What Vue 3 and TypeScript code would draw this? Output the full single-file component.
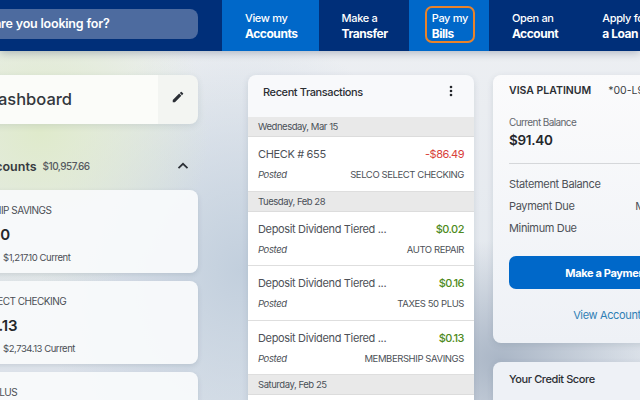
<template>
  <div class="page">
    <header class="top">
      <div class="search">What are you looking for?</div>
      <nav class="nav">
        <a v-for="item in navItems" :key="item.bottom" class="nav-item" :class="{ active: item.active, focus: item.focus }">
          <span class="nav-in">
            <span>{{ item.top }}</span>
            <b>{{ item.bottom }}</b>
          </span>
        </a>
      </nav>
    </header>

    <main class="columns">
      <section class="col-left">
        <div class="dash">
          <h1>Dashboard</h1>
          <button class="edit" aria-label="Edit">
            <svg width="14" height="14" viewBox="0 0 24 24"><path fill="#2b2f36" d="M3 17.25V21h3.75L17.81 9.94l-3.75-3.75L3 17.25zM20.71 7.04a1 1 0 0 0 0-1.41l-2.34-2.34a1 1 0 0 0-1.41 0l-1.83 1.83 3.75 3.75 1.83-1.83z"/></svg>
          </button>
        </div>
        <div class="acc-head">
          <span class="acc-title">Accounts</span>
          <span class="acc-total">$10,957.66</span>
          <svg class="chev" width="14" height="14" viewBox="0 0 14 14"><path d="M2.5 9.2 7 4.8l4.5 4.4" fill="none" stroke="#2b2f36" stroke-width="1.7"/></svg>
        </div>
        <div v-for="acc in accounts" :key="acc.name" class="acc-card">
          <div class="acc-name">{{ acc.name }}</div>
          <div class="acc-amount">{{ acc.amount }}</div>
          <div class="acc-sub">{{ acc.amount }} Current</div>
        </div>
      </section>

      <section class="card tx">
        <div class="tx-head">
          <span>Recent Transactions</span>
          <svg width="4" height="12" viewBox="0 0 4 12"><g fill="#23262b"><circle cx="2" cy="2" r="1.3"/><circle cx="2" cy="6" r="1.3"/><circle cx="2" cy="10" r="1.3"/></g></svg>
        </div>
        <template v-for="group in groups" :key="group.date">
          <div class="tx-date">{{ group.date }}</div>
          <div v-for="row in group.rows" :key="row.account" class="tx-row">
            <div class="tx-line">
              <span>{{ row.title }}</span>
              <span class="amt" :class="row.amount.startsWith('-') ? 'neg' : 'pos'">{{ row.amount }}</span>
            </div>
            <div class="tx-line small">
              <i>Posted</i>
              <span>{{ row.account }}</span>
            </div>
          </div>
        </template>
      </section>

      <section class="col-right">
        <div class="card visa">
          <div class="visa-head">
            <b>VISA PLATINUM</b>
            <span>*00-L9</span>
          </div>
          <div class="bal-label">Current Balance</div>
          <div class="bal">$91.40</div>
          <hr>
          <div v-for="line in dueLines" :key="line.label" class="due">
            <span>{{ line.label }}</span>
            <span class="due-val">{{ line.value }}</span>
          </div>
          <button class="pay">Make a Payment</button>
          <a class="view">View Account</a>
        </div>
        <div class="card credit">Your Credit Score</div>
      </section>
    </main>
  </div>
</template>

<script setup lang="ts">
const navItems = [
  { top: 'View my', bottom: 'Accounts', active: true },
  { top: 'Make a', bottom: 'Transfer' },
  { top: 'Pay my', bottom: 'Bills', active: true, focus: true },
  { top: 'Open an', bottom: 'Account' },
  { top: 'Apply for', bottom: 'a Loan' },
]

const accounts = [
  { name: 'MEMBERSHIP SAVINGS', amount: '$1,217.10' },
  { name: 'SELCO SELECT CHECKING', amount: '$2,734.13' },
  { name: 'TAXES 50 PLUS', amount: '$1,006.43' },
]

const groups = [
  {
    date: 'Wednesday, Mar 15',
    rows: [{ title: 'CHECK # 655', amount: '-$86.49', account: 'SELCO SELECT CHECKING' }],
  },
  {
    date: 'Tuesday, Feb 28',
    rows: [
      { title: 'Deposit Dividend Tiered ...', amount: '$0.02', account: 'AUTO REPAIR' },
      { title: 'Deposit Dividend Tiered ...', amount: '$0.16', account: 'TAXES 50 PLUS' },
      { title: 'Deposit Dividend Tiered ...', amount: '$0.13', account: 'MEMBERSHIP SAVINGS' },
    ],
  },
  {
    date: 'Saturday, Feb 25',
    rows: [{ title: 'Deposit Dividend Tiered ...', amount: '$0.04', account: 'HOLIDAY CLUB' }],
  },
]

const dueLines = [
  { label: 'Statement Balance', value: '$91.40' },
  { label: 'Payment Due', value: 'Mar 25, 2023' },
  { label: 'Minimum Due', value: '$25.00' },
]
</script>

<style>
html, body { margin: 0; overflow: hidden; }
</style>

<style scoped>
.page {
  width: 640px; height: 400px; overflow: hidden; position: relative;
  font-family: "Inter", "Liberation Sans", sans-serif; color: #33373d;
  background:
    radial-gradient(ellipse 170px 170px at 40px 130px, #dfeacb 0%, rgba(223,234,203,0) 100%),
    radial-gradient(ellipse 200px 240px at 240px 270px, #c2cfdd 0%, rgba(194,207,221,0) 100%),
    radial-gradient(ellipse 160px 120px at 500px 360px, #aab6c6 0%, rgba(170,182,198,0) 100%),
    linear-gradient(180deg, #eef0f3, #dfe5ec);
}
.top {
  height: 51px; background: #002f79; display: flex; align-items: stretch;
  box-shadow: 0 2px 8px rgba(0, 20, 60, 0.25); position: relative;
}
.search {
  flex: none; width: 238px; height: 30px; margin: 9px 24px 0 -40px; padding-left: 0;
  box-sizing: border-box; line-height: 30px; border-radius: 8px; letter-spacing: -0.2px;
  background: #4d6b9f; color: #fff; font-size: 12.5px; font-weight: 600; white-space: nowrap;
}
.nav { display: flex; }
.nav-item { padding: 0 21px 0 23px; display: flex; align-items: center; color: #fff; font-size: 11px; font-weight: 500; white-space: nowrap; letter-spacing: -0.35px; }
.nav-item.active { background: #0068c9; }
.nav-in { display: flex; flex-direction: column; gap: 2px; line-height: 14px; }
.nav-in b { font-weight: 700; font-size: 12px; letter-spacing: -0.45px; }
.nav-item.focus { position: relative; }
.nav-item.focus::after {
  content: ""; position: absolute; left: 16px; top: 6px; width: 50px; height: 37px;
  box-sizing: border-box; border: 2.5px solid #e8832a; border-radius: 7px;
}
.columns { display: flex; align-items: flex-start; margin-left: -74px; padding-top: 24px; }
.col-left { width: 272px; flex: none; margin-right: 50px; }
.dash {
  height: 49px; display: flex; border-radius: 8px; overflow: hidden;
  background: #f3f5f2; box-shadow: 0 2px 6px rgba(60, 80, 100, 0.12);
}
.dash h1 { flex: 1; margin: 0; padding-left: 60px; font-size: 16.5px; font-weight: 500; line-height: 48px; background: #fbfcf9; }
.edit { width: 40px; border: 0; background: none; padding: 0 0 6px; display: flex; align-items: center; justify-content: center; }
.acc-head { display: flex; align-items: center; height: 18px; margin: 33px 0 15px; padding-left: 53px; color: #363a40; }
.acc-title { font-weight: 600; font-size: 12.5px; }
.acc-total { margin-left: 6px; font-size: 10px; font-weight: 500; color: #555a60; letter-spacing: -0.5px; }
.chev { margin-left: auto; margin-right: 8px; }
.acc-card {
  height: 83px; box-sizing: border-box; padding: 13px 0 0 22px; margin-bottom: 8px; border-radius: 8px;
  background: rgba(248, 250, 251, 0.95); box-shadow: 0 2px 5px rgba(60, 80, 100, 0.15);
}
.acc-name { font-size: 10px; color: #4b4f55; line-height: 14px; letter-spacing: -0.5px; }
.acc-amount { font-size: 15px; font-weight: 600; color: #24272b; margin-top: 8px; line-height: 20px; letter-spacing: -0.1px; }
.acc-sub { font-size: 9.5px; color: #4b4f55; margin-top: 6px; padding-left: 55px; line-height: 14px; letter-spacing: -0.45px; }
.card { background: #f8f9fb; border-radius: 8px; box-shadow: 0 2px 6px rgba(60, 80, 100, 0.15); }
.tx { width: 226px; flex: none; margin-right: 19px; overflow: hidden; }
.tx-head { height: 42px; box-sizing: border-box; padding: 10px 21px 0 15px; display: flex; justify-content: space-between; font-size: 11px; font-weight: 500; color: #2b2e33; letter-spacing: -0.4px; }
.tx-date { line-height: 19px; padding-left: 10px; font-size: 9.5px; color: #4a5058; background: #e9e9e9; border-bottom: 1px solid #dcdcdc; height: 19px; letter-spacing: -0.45px; }
.tx-row { height: 54.5px; box-sizing: border-box; padding: 9px 10px 0; background: #fff; border-bottom: 1px solid #dedede; }
.tx-line { display: flex; justify-content: space-between; font-size: 11px; line-height: 16px; color: #4d5157; white-space: nowrap; letter-spacing: -0.35px; }
.tx-line.small { font-size: 9.5px; margin-top: 5px; letter-spacing: -0.4px; }
.amt { letter-spacing: -0.5px; }
.neg { color: #d8413a; }
.pos { color: #4e8a20; font-weight: 500; }
.col-right { width: 228px; flex: none; display: flex; flex-direction: column; gap: 19px; }
.visa { height: 268px; box-sizing: border-box; padding: 9px 16px 0; background: linear-gradient(180deg, #fbfbfc, #eef1f6); }
.visa-head { display: flex; gap: 17px; font-size: 10.5px; color: #3a3e44; line-height: 14px; }
.visa-head b { color: #2b2e33; font-weight: 600; }
.bal-label { font-size: 10px; color: #62666c; margin-top: 18px; line-height: 13px; letter-spacing: -0.6px; }
.bal { font-size: 13.5px; font-weight: 600; color: #24272b; margin-top: 1px; line-height: 20px; letter-spacing: -0.3px; }
hr { border: 0; border-top: 1px solid #d5d7da; margin: 13px 0 12px; }
.due { display: flex; justify-content: space-between; font-size: 11px; color: #4d5157; line-height: 16px; margin-bottom: 6px; letter-spacing: -0.35px; }
.due-val { letter-spacing: 0; }
.pay { display: block; width: 100%; height: 33px; margin-top: 20px; border: 0; border-radius: 7px; background: #0068c9; color: #fff; font: 700 11px "Inter", sans-serif; letter-spacing: -0.35px; }
.view { display: block; text-align: center; margin-top: 19px; font-size: 11px; color: #2f7fb5; letter-spacing: -0.35px; }
.credit { height: 60px; box-sizing: border-box; padding: 10px 16px; font-size: 11px; font-weight: 500; color: #2b2e33; letter-spacing: -0.4px; background: #eef1f6; }
</style>
